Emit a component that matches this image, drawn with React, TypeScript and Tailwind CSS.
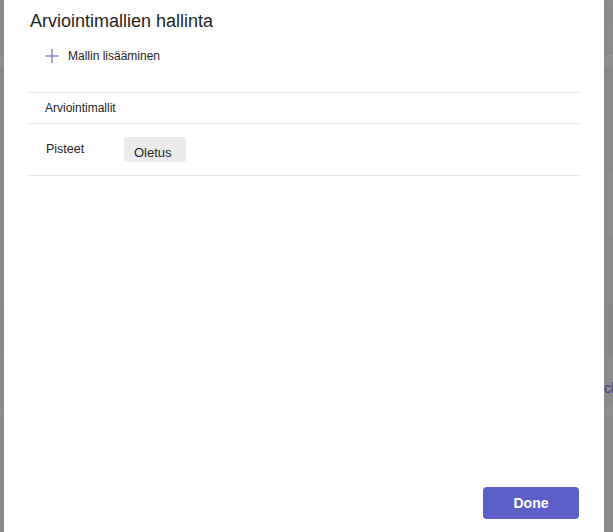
import React from "react";

function PlusIcon() {
  return (
    <svg width="16" height="16" viewBox="0 0 16 16" fill="none">
      <path d="M8 1v14M1 8h14" stroke="#5558b8" strokeWidth="1.1" />
    </svg>
  );
}

function Strip({ children }: { children?: React.ReactNode }) {
  return (
    <div className="relative flex flex-col h-full">
      <div className="h-[7px] bg-[#8c8c8c]" />
      <div className="h-[15px] bg-[#8a8a8a] border-t border-[#909090]" />
      <div className="h-[33px] bg-[#8b8b8b]" />
      <div className="h-[13px] bg-[#8f8f8f] border-t border-[#939393]" />
      <div className="h-[107px] bg-[#8a8a8a]" />
      <div className="h-[57px] bg-[#8b8b8b] border-t border-[#909090]" />
      <div className="h-[68px] bg-[#8a8a8a] border-t border-[#909090]" />
      <div className="h-[55px] bg-[#888888] border-t border-[#8d8d8d]" />
      <div className="h-[50px] bg-[#8b8b8b]" />
      <div className="h-[10px] bg-[#8d8d8d] border-t border-[#909090]" />
      <div className="flex-1 bg-[#8a8a8a] border-t border-[#909090]" />
      {children}
    </div>
  );
}

export default function App() {
  return (
    <div
      className="w-[613px] h-[532px] flex bg-[#8a8a8a] overflow-hidden"
      style={{ fontFamily: '"Liberation Sans", Arial, sans-serif' }}
    >
      <div className="w-[4px] h-full">
        <Strip />
      </div>
      <div className="w-[600px] h-full bg-white flex flex-col px-[25px]">
        <h1 className="pt-[9px] pl-[1px] text-[18px] leading-[24px] text-[#242424] font-normal">
          Arviointimallien hallinta
        </h1>
        <button className="mt-[11px] ml-[15px] flex items-center gap-[8px] h-[24px] text-[12px] text-[#242424] w-fit">
          <PlusIcon />
          <span>Mallin lisääminen</span>
        </button>
        <div className="mt-[24px] border-t border-[#e0e0e0]" />
        <div className="h-[30px] flex items-center pl-[16px] text-[12px] text-[#242424]">
          Arviointimallit
        </div>
        <div className="border-t border-[#e0e0e0]" />
        <div className="h-[51px] flex items-center text-[12.5px] text-[#242424]">
          <div className="w-[95px] pl-[17px]">Pisteet</div>
          <div className="w-[62px] h-[25px] bg-[#ebebeb] rounded-[3px] pl-[10px] pt-[8px] text-[13px] leading-[15px]">
            Oletus
          </div>
        </div>
        <div className="border-t border-[#e0e0e0]" />
        <div className="flex-1" />
        <div className="flex justify-end pb-[13px]">
          <button className="w-[96px] h-[32px] rounded-[4px] bg-[#5b5fc7] text-white text-[14px] font-bold">
            Done
          </button>
        </div>
      </div>
      <div className="w-[9px] h-full overflow-hidden">
        <Strip>
          <span className="absolute left-0 top-[379px] text-[14px] leading-[18px] text-[#3d3f85] whitespace-nowrap">
            ch
          </span>
        </Strip>
      </div>
    </div>
  );
}
